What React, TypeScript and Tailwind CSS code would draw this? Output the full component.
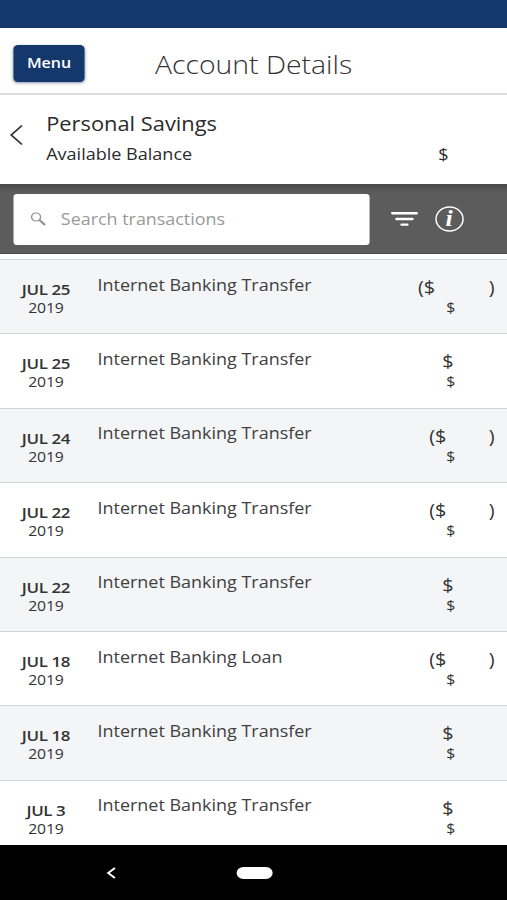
type Transaction = {
  day: string;
  title: string;
  kind: "credit" | "debit" | "largeDebit";
};

const transactions: Transaction[] = [
  { day: "JUL 25", title: "Internet Banking Transfer", kind: "largeDebit" },
  { day: "JUL 25", title: "Internet Banking Transfer", kind: "credit" },
  { day: "JUL 24", title: "Internet Banking Transfer", kind: "debit" },
  { day: "JUL 22", title: "Internet Banking Transfer", kind: "debit" },
  { day: "JUL 22", title: "Internet Banking Transfer", kind: "credit" },
  { day: "JUL 18", title: "Internet Banking Loan", kind: "debit" },
  { day: "JUL 18", title: "Internet Banking Transfer", kind: "credit" },
  { day: "JUL 3", title: "Internet Banking Transfer", kind: "credit" },
];

const amountWidth = {
  credit: "w-[46.5px]",
  debit: "w-[58px]",
  largeDebit: "w-[68px]",
};

function Header() {
  return (
    <header className="grid h-[67px] grid-cols-[75px_1fr_75px] items-center border-b-2 border-[#dcdcdc] bg-white">
      <button className="ml-[12px] mt-[5px] h-[37px] w-[63px] rounded bg-[#14386c] text-[14.2px] font-semibold text-white shadow-sm shadow-gray-400">Menu</button>
      <h1 className="mt-[9px] text-center text-[25.2px] font-light text-[#333]">Account Details</h1>
    </header>
  );
}

function AccountSummary() {
  return (
    <section className="flex h-[89px] bg-white text-[#2b2b2b]">
      <svg className="ml-[8px] mt-[29px] h-[22px] w-[13px] shrink-0" viewBox="0 0 13 22" fill="none" stroke="#333" strokeWidth="1.7">
        <path d="M11.5 1.5 2 11l9.5 9.5" />
      </svg>
      <div className="ml-[20px] mt-[13px] flex-1">
        <h2 className="text-[19.4px] leading-[32px]">Personal Savings</h2>
        <div className="flex justify-between text-[16px] leading-[28px]">
          <span>Available Balance</span>
          <span className="w-[61px]">$</span>
        </div>
      </div>
    </section>
  );
}

function SearchBar() {
  return (
    <section className="flex h-[70px] items-center border-y border-[#484848] bg-linear-to-b from-[#4a4a4a] to-[#5c5c5c] to-10%">
      <div className="ml-[11.5px] flex h-[51px] w-[316.5px] items-center rounded-[3px] bg-white text-[#999]">
        <svg className="ml-[15px] h-[14px] w-[14px]" viewBox="0 0 14 14" fill="none" stroke="#909090">
          <circle cx="5" cy="5" r="4" strokeWidth="1.2" />
          <path d="M8 8l5 5" strokeWidth="2" />
        </svg>
        <span className="ml-[13.5px] mt-[2px] text-[15.9px]">Search transactions</span>
      </div>
      <svg className="ml-[19px] h-[16px] w-[24px]" viewBox="0 0 24 16" fill="none" stroke="white" strokeWidth="2.4" strokeLinecap="round">
        <path d="M1.2 2.2h21.6M5 8h14M9.5 13.6h5" />
      </svg>
      <svg className="ml-[15px] h-[26px] w-[26px]" viewBox="0 0 26 26">
        <circle cx="13" cy="13" r="12" fill="none" stroke="white" strokeWidth="1.3" />
        <text x="12.6" y="20" textAnchor="middle" className="fill-white font-['Liberation_Serif',serif] text-[23px] font-bold italic">i</text>
      </svg>
    </section>
  );
}

function TransactionRow({ day, title, kind }: Transaction) {
  return (
    <li className="flex h-[74.4px] border-t-[1.5px] border-[#d2d4d5] bg-white odd:bg-[#f3f5f7]">
      <div className="w-[81.5px] pt-[19px] text-center text-[#333]">
        <div className="text-[15px] font-semibold leading-[20px] tracking-[-0.35px]">{day}</div>
        <div className="text-[14px] leading-[17px] tracking-[-0.2px]">2019</div>
      </div>
      <div className="ml-[5px] flex-1 pt-[12.6px] text-[15.95px] leading-[24px] text-[#404040]">{title}</div>
      <div className="flex flex-col items-end pr-[11px] pt-[15px] text-[#333]">
        <div className={`flex justify-between text-[17.6px] leading-[24px] ${amountWidth[kind]}`}>
          <span>{kind === "credit" ? "$" : "($"}</span>
          {kind !== "credit" && <span>)</span>}
        </div>
        <div className="w-[43px] text-[14px] leading-[17px]">$</div>
      </div>
    </li>
  );
}

function NavigationBar() {
  return (
    <nav className="flex h-[55px] shrink-0 items-center bg-black">
      <svg className="ml-[94px] h-[12px] w-[9px]" viewBox="0 0 9 12" fill="none" stroke="white" strokeWidth="1.8">
        <path d="M8 1 2 6l6 5" />
      </svg>
      <div className="ml-[106.5px] h-[12px] w-[32.5px] rounded-full bg-white" />
    </nav>
  );
}

// The phone layout is 450px wide and is stretched to fill the 507px page.
export default function App() {
  return (
    <div className="h-[900px] w-[507px] overflow-hidden bg-white">
      <div className="flex h-[900px] w-[450px] origin-top-left scale-x-[1.12667] flex-col font-['Open_Sans',sans-serif]">
        <div className="h-[28px] shrink-0 bg-[#14386c]" />
        <Header />
        <AccountSummary />
        <SearchBar />
        <ul className="min-h-0 flex-1 overflow-hidden pt-[5px]">
          {transactions.map((transaction, index) => (
            <TransactionRow key={index} {...transaction} />
          ))}
        </ul>
        <NavigationBar />
      </div>
    </div>
  );
}
